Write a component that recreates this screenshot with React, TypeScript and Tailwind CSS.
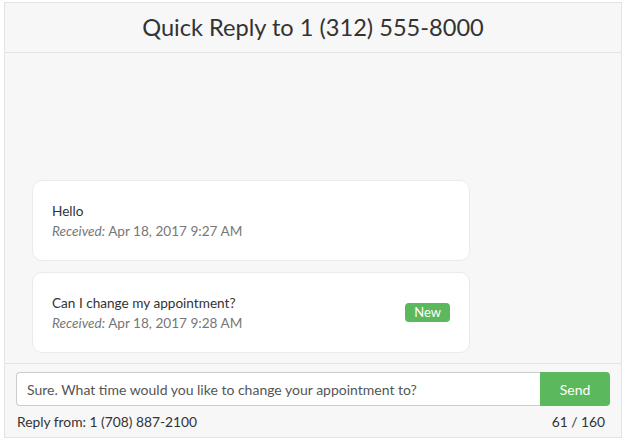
export default function App() {
  const messages = [
    { text: "Hello", time: "Apr 18, 2017 9:27 AM", isNew: false },
    { text: "Can I change my appointment?", time: "Apr 18, 2017 9:28 AM", isNew: true },
  ];

  return (
    <div
      className="w-[627px] h-[444px] bg-white pt-[2px] pl-[4px]"
      style={{ fontFamily: "Lato, 'Open Sans', sans-serif" }}
    >
      <div className="w-[618px] h-[436px] flex flex-col border border-[#e3e3e3] bg-[#f7f7f7]">
        {/* header */}
        <div className="h-[50px] flex items-center justify-center border-b border-[#e3e3e3]">
          <h1 className="text-[23.6px] text-[#333333]">Quick Reply to 1 (312) 555-8000</h1>
        </div>

        {/* messages */}
        <div className="flex-1 flex flex-col justify-end gap-[11px] pl-[27px] pb-[10px]">
          {messages.map((m) => (
            <div
              key={m.text}
              className="w-[438px] h-[81px] flex items-center justify-between rounded-[10px] border border-[#ebebeb] bg-white pl-[19px] pr-[19px]"
            >
              <div className="text-[13.6px] leading-[20px] text-[#333333]">
                <div>{m.text}</div>
                <div className="text-[#777777]">
                  <i>Received:</i> {m.time}
                </div>
              </div>
              {m.isNew && (
                <span className="rounded-[4px] bg-[#5cb85c] px-[9px] text-[13px] leading-[19px] text-white">
                  New
                </span>
              )}
            </div>
          ))}
        </div>

        {/* footer */}
        <div className="h-[74px] border-t border-[#e3e3e3] px-[11px] pt-[8px]">
          <div className="flex h-[34px]">
            <div className="flex-1 flex items-center rounded-l-[4px] border border-r-0 border-[#cccccc] bg-white pl-[10px] text-[14px] text-[#555555]">
              Sure. What time would you like to change your appointment to?
            </div>
            <button className="w-[70px] rounded-r-[4px] bg-[#5cb85c] text-[14px] text-white">Send</button>
          </div>
          <div className="flex justify-between pl-[1px] pr-[5px] pt-[6px] text-[13.8px] text-[#333333]">
            <span>Reply from: 1 (708) 887-2100</span>
            <span>61 / 160</span>
          </div>
        </div>
      </div>
    </div>
  );
}
